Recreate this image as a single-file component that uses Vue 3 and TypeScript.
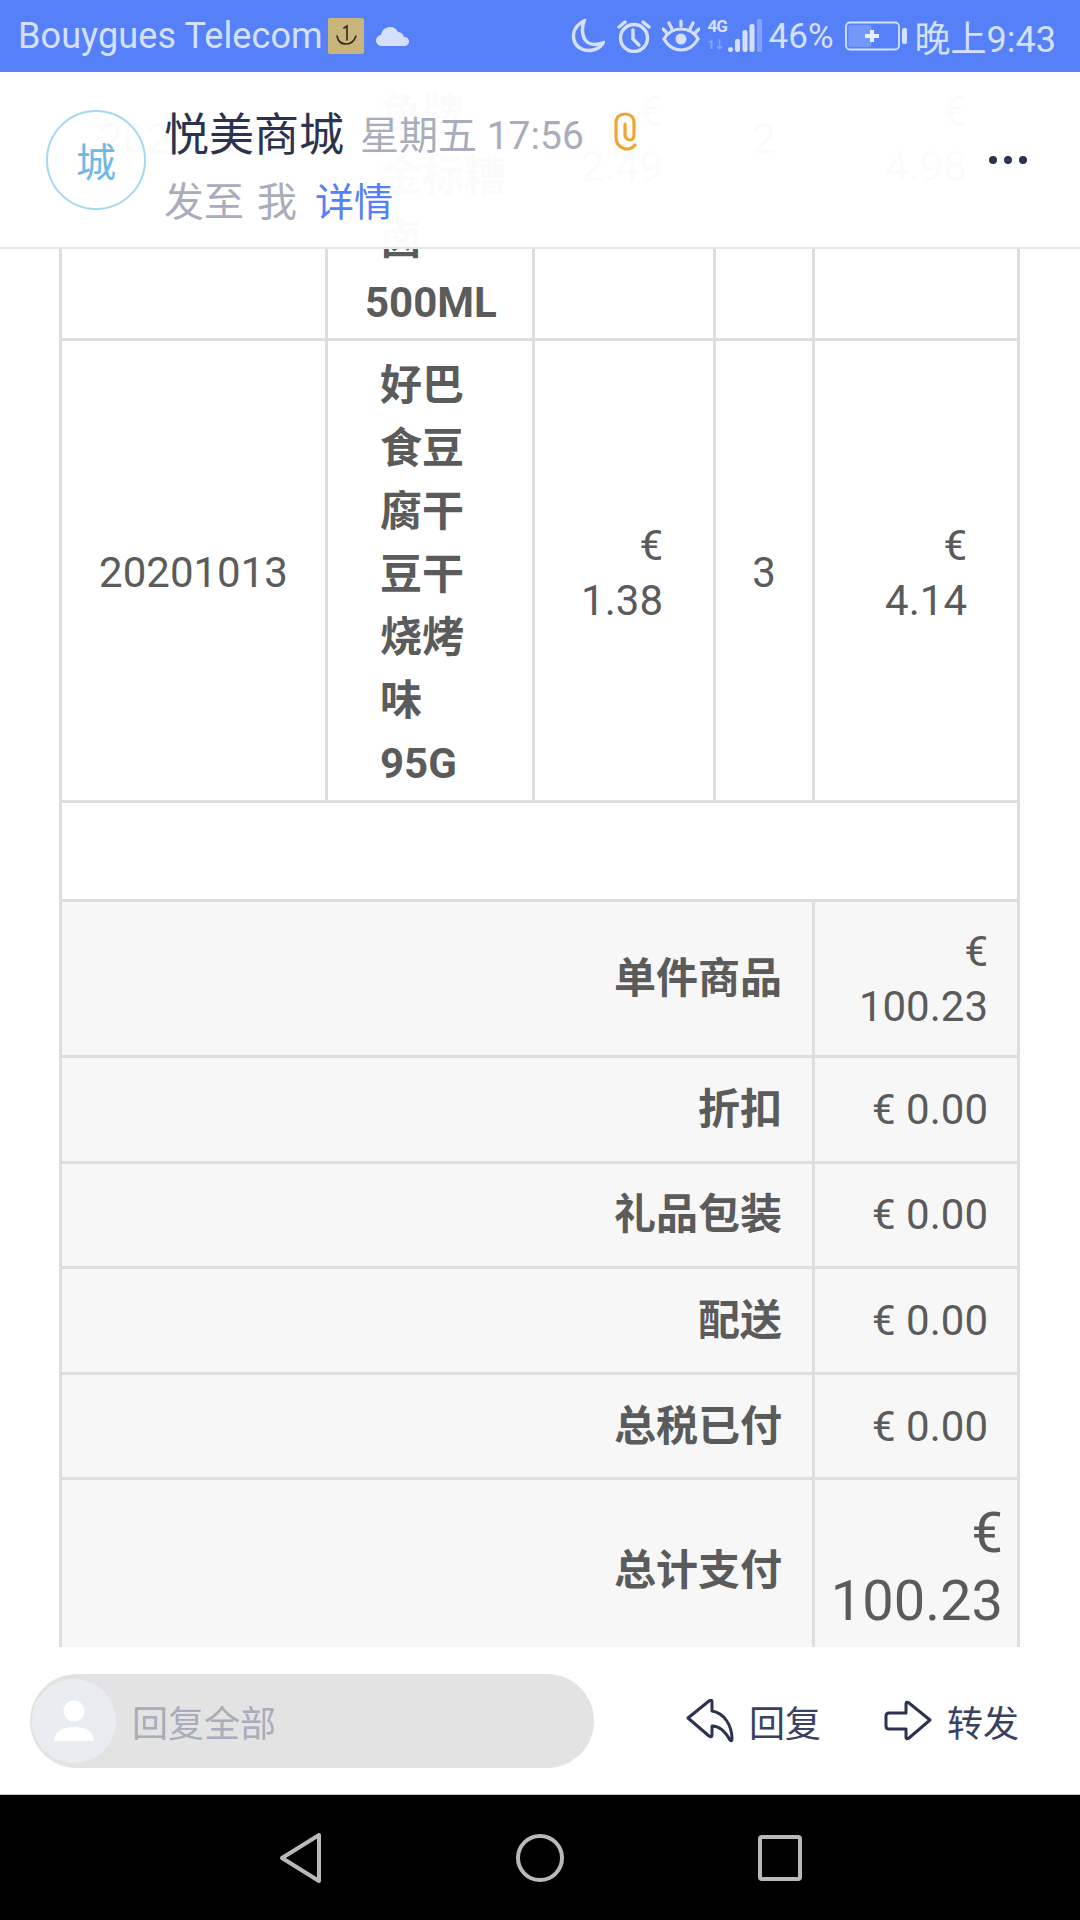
<template>
  <div class="screen">
    <!-- status bar -->
    <div class="status">
      <div class="status-left">
        <span class="carrier">Bouygues Telecom</span>
        <span class="tile">
          <svg width="36" height="36" viewBox="0 0 36 36" fill="none" stroke="#2c2a22" stroke-width="1.6" stroke-linecap="round">
            <path d="M9 18c1 6 5 8 9 8s8-2 10-8" />
            <path d="M16 10l3-2v14" />
          </svg>
        </span>
        <svg class="cloud" width="34" height="20" viewBox="0 0 34 20" fill="#d5e0ff">
          <path d="M7 20a5.500 5.500 0 0 1-1-11 9 9 0 0 1 17-3 7 7 0 0 1 6 5 4.500 4.500 0 0 1 1 9z" />
        </svg>
      </div>
      <div class="status-right">
        <svg width="34" height="34" viewBox="0 0 34 34" fill="none" stroke="#d5e0ff" stroke-width="3.500" stroke-linecap="round">
          <path d="M13 2C5 6 1 13 3 21c2 8 11 12 19 10 4-1 8-3 10-7-9 3-16 1-19-5-2-5-2-11 0-17z" />
        </svg>
        <svg class="ml-12" width="34" height="34" viewBox="0 0 34 34" fill="none" stroke="#d5e0ff" stroke-width="3.400" stroke-linecap="round">
          <circle cx="17" cy="19" r="13.500" />
          <path d="M16 11v9l6 6" />
          <path d="M2 8l6-5M32 8l-6-5" />
        </svg>
        <svg class="ml-11" width="38" height="34" viewBox="0 0 38 34" fill="none" stroke="#d5e0ff" stroke-width="3.200" stroke-linecap="round">
          <path d="M2 20c4-7 10-10 17-10s13 3 17 10c-4 7-10 11-17 11S6 27 2 20z" />
          <circle cx="19" cy="20" r="5.500" fill="#d5e0ff" stroke="none" />
          <path d="M19 2v5M7 4l3 6M31 4l-3 6M1 10l4 4M37 10l-4 4" />
        </svg>
        <div class="net">
          <span class="net-4g">4G</span>
          <span class="net-arrows">1↓</span>
        </div>
        <svg width="35" height="34" viewBox="0 0 35 34" fill="#d5e0ff">
          <rect x="1" y="28" width="5" height="5" rx="2.500" />
          <rect x="8" y="20" width="5" height="13" rx="2" />
          <rect x="15.500" y="11" width="5" height="22" rx="2" />
          <rect x="22.500" y="5" width="5" height="28" rx="2" />
          <rect x="30" y="0" width="5" height="33" rx="1" opacity="0.35" />
        </svg>
        <span class="pct">46%</span>
        <svg class="ml-11" width="62" height="30" viewBox="0 0 62 30" fill="none">
          <rect x="1" y="1.500" width="53" height="27" rx="4" stroke="#d5e0ff" stroke-width="1.800" />
          <rect x="3.500" y="4" width="23" height="22" rx="2" fill="#d5e0ff" opacity="0.25" />
          <path d="M20 15h14M27 9v12" stroke="#e8eeff" stroke-width="4" />
          <rect x="57" y="7" width="5" height="16" rx="2" fill="#d5e0ff" />
        </svg>
        <span class="clock">晚上9:43</span>
      </div>
    </div>

    <!-- scrolled mail body, the head floats over it -->
    <div class="body">
      <table class="order">
        <colgroup>
          <col class="c-date" />
          <col class="c-name" />
          <col class="c-price" />
          <col class="c-qty" />
          <col class="c-total" />
        </colgroup>
        <tbody>
          <tr v-for="row in items" :key="row.name" :class="row.cls">
            <td class="date">{{ row.date }}</td>
            <td class="name">
              <div v-for="line in row.lines" :key="line">{{ line }}</div>
            </td>
            <td class="price">€<br />{{ row.price }}</td>
            <td class="qty">{{ row.qty }}</td>
            <td class="price">€<br />{{ row.total }}</td>
          </tr>
          <tr><td class="spacer" colspan="5"></td></tr>
          <tr v-for="row in totals" :key="row.label" class="sum" :class="row.cls">
            <td class="sum-label" colspan="4">{{ row.label }}</td>
            <td class="sum-value" v-html="row.value"></td>
          </tr>
        </tbody>
      </table>

      <div class="head">
        <div class="logo">城</div>
        <div class="head-text">
          <div class="head-row">
            <span class="sender">悦美商城</span>
            <span class="when">星期五 17:56</span>
            <svg class="clip" width="24" height="40" viewBox="0 0 24 40" fill="none" stroke="#f5a32f" stroke-width="3.200" stroke-linecap="round">
              <path d="M21 33c-3 4-8 5-12 3-5-2-7-6-7-11V11C2 5 6 2 11 2s9 3 9 9v12c0 3-2 5-4 5s-5-2-5-5V12" />
            </svg>
          </div>
          <div class="head-row second">
            <span class="to">发至 我</span>
            <span class="detail">详情</span>
          </div>
        </div>
        <div class="dots"><i></i><i></i><i></i></div>
      </div>
    </div>

    <!-- reply bar -->
    <div class="reply">
      <div class="pill">
        <div class="avatar">
          <svg width="42" height="42" viewBox="0 0 42 42" fill="#fff">
            <circle cx="21" cy="11" r="10.500" />
            <path d="M1 41c0-9 8-14 20-14s20 5 20 14z" />
          </svg>
        </div>
        <span class="pill-text">回复全部</span>
      </div>
      <div class="actions">
        <div class="action">
          <svg width="48" height="44" viewBox="0 0 48 44" fill="none" stroke="#2b3350" stroke-width="3" stroke-linejoin="round">
            <path d="M2 19L23 2q3-2 3 1v9c12 2 20 14 20 28q0 3-2 1c-5-9-11-14-18-14v9q0 3-3 1z" />
          </svg>
          <span>回复</span>
        </div>
        <div class="action">
          <svg width="48" height="42" viewBox="0 0 48 42" fill="none" stroke="#2b3350" stroke-width="3" stroke-linejoin="round">
            <path d="M5 13h17V4q0-3 3-1l21 17-21 18q-3 2-3-1v-8H5q-3 0-3-3V16q0-3 3-3z" />
          </svg>
          <span>转发</span>
        </div>
      </div>
    </div>

    <!-- nav bar -->
    <div class="nav">
      <svg width="48" height="52" viewBox="0 0 48 52" fill="none" stroke="#b9b9b9" stroke-width="4" stroke-linejoin="round">
        <path d="M43 3v46L6 26z" />
      </svg>
      <svg width="48" height="52" viewBox="0 0 48 52" fill="none" stroke="#b9b9b9" stroke-width="4">
        <circle cx="24" cy="26" r="22" />
      </svg>
      <svg width="48" height="52" viewBox="0 0 48 52" fill="none" stroke="#b9b9b9" stroke-width="4" stroke-linejoin="round">
        <rect x="4" y="5" width="40" height="42" rx="2" />
      </svg>
    </div>
  </div>
</template>

<script setup lang="ts">
interface Item {
  date: string;
  name: string;
  lines: string[];
  price: string;
  qty: number;
  total: string;
  cls: string;
}

interface Total {
  label: string;
  value: string;
  cls?: string;
}

const items: Item[] = [
  {
    date: "20201013",
    name: "fish",
    lines: ["鱼牌", "金标糟", "卤", "500ML"],
    price: "2.49",
    qty: 2,
    total: "4.98",
    cls: "cut",
  },
  {
    date: "20201013",
    name: "tofu",
    lines: ["好巴", "食豆", "腐干", "豆干", "烧烤", "味", "95G"],
    price: "1.38",
    qty: 3,
    total: "4.14",
    cls: "low",
  },
];

const totals: Total[] = [
  { label: "单件商品", value: "€<br>100.23", cls: "two-line" },
  { label: "折扣", value: "€ 0.00" },
  { label: "礼品包装", value: "€ 0.00" },
  { label: "配送", value: "€ 0.00" },
  { label: "总税已付", value: "€ 0.00" },
  { label: "总计支付", value: "€<br>100.23", cls: "grand" },
];
</script>

<style>
html,
body {
  margin: 0;
  background: #fff;
}
</style>

<style scoped>
.screen {
  width: 1080px;
  height: 1920px;
  display: flex;
  flex-direction: column;
  overflow: hidden;
  font-family: Roboto, "Noto Sans CJK SC", sans-serif;
  background: #fff;
}

/* status bar */
.status {
  height: 72px;
  flex: none;
  display: flex;
  align-items: center;
  justify-content: space-between;
  padding: 0 24px 0 18px;
  background: #5580f8;
  color: #d5e0ff;
  font-size: 35px;
}
.status-left,
.status-right {
  display: flex;
  align-items: center;
}
.carrier {
  font-size: 36px;
  letter-spacing: 0.1px;
}
.tile {
  width: 36px;
  height: 36px;
  margin-left: 5px;
  background: #c9b47c;
  border-radius: 2px;
}
.tile svg {
  display: block;
}
.cloud {
  margin-left: 11px;
}
.ml-12 {
  margin-left: 12px;
}
.ml-11 {
  margin-left: 11px;
}
.net {
  width: 19px;
  margin-left: 8px;
  height: 34px;
  display: flex;
  flex-direction: column;
  justify-content: space-between;
  font-size: 17px;
  line-height: 15px;
  font-weight: 700;
  letter-spacing: -1px;
  white-space: nowrap;
}
.net-arrows {
  opacity: 0.4;
  font-size: 12px;
}
.pct {
  margin-left: 7px;
}
.clock {
  margin-left: 8px;
  font-size: 36px;
}

/* body and table */
.body {
  flex: 1;
  position: relative;
  overflow: hidden;
}
.order {
  width: 958px;
  margin: -132px 0 0 59px;
  table-layout: fixed;
  border-collapse: collapse;
  color: #5b5b5b;
  font-size: 42px;
  line-height: 55px;
}
.order td {
  border: 3px solid #dedede;
  padding: 0;
}
.c-date {
  width: 266px;
}
.c-name {
  width: 207px;
}
.c-price {
  width: 181px;
}
.c-qty {
  width: 99px;
}
.c-total {
  width: 205px;
}
.date,
.qty {
  text-align: center;
}
.order .name {
  padding: 13px 0 5px 52px;
  font-weight: 700;
  line-height: 63px;
  white-space: nowrap;
}
.order .cut .name {
  padding: 139px 0 4px 37px;
}
.cut .name div:nth-child(-n + 3) {
  padding-left: 15px;
}
.order .price {
  padding-right: 50px;
  text-align: right;
}
.order .cut .date,
.order .cut .price,
.order .cut .qty {
  padding-bottom: 4px;
}
.order .low .date,
.order .low .price,
.order .low .qty {
  padding-top: 4px;
}
.order .spacer {
  height: 96px;
}
.sum td {
  background: #f7f7f7;
  height: 102.6px;
  text-align: right;
}
.order .sum-label {
  padding-right: 30px;
  font-weight: 700;
}
.order .sum-value {
  padding-right: 29px;
}
.sum.two-line td {
  height: 153px;
}
.sum.grand td {
  height: 168px;
}
.order .sum.grand .sum-label {
  padding-top: 6px;
}
.order .sum.grand .sum-value {
  padding-right: 14px;
  font-size: 56px;
  line-height: 68px;
}

/* mail head floats over the table */
.head {
  position: absolute;
  top: 0;
  left: 0;
  right: 0;
  height: 177px;
  box-sizing: border-box;
  display: flex;
  align-items: center;
  padding-left: 46px;
  background: rgba(255, 255, 255, 0.975);
  border-bottom: 2px solid #e6e6e6;
}
.logo {
  width: 100px;
  height: 100px;
  flex: none;
  box-sizing: border-box;
  display: flex;
  align-items: center;
  justify-content: center;
  border: 2px solid #a6d8ef;
  border-radius: 50%;
  color: #6fb9e6;
  font-size: 40px;
}
.head-text {
  margin: 6px 0 0 18px;
}
.head-row {
  height: 72px;
  display: flex;
  align-items: center;
  white-space: nowrap;
}
.second {
  height: 62px;
}
.sender {
  color: #2b3350;
  font-size: 45px;
}
.when {
  margin-left: 16px;
  color: #a9adbb;
  font-size: 39px;
}
.clip {
  margin-left: 30px;
}
.to {
  color: #a9adbb;
  font-size: 40px;
  word-spacing: 3px;
}
.detail {
  margin-left: 18px;
  color: #5580f8;
  font-size: 39px;
}
.dots {
  margin-left: auto;
  padding-right: 53px;
  display: flex;
  gap: 7px;
}
.dots i {
  width: 8px;
  height: 8px;
  border-radius: 50%;
  background: #2b3350;
}

/* reply bar */
.reply {
  height: 147px;
  flex: none;
  box-sizing: border-box;
  display: flex;
  align-items: center;
  padding: 0 61px 0 30px;
  background: #fff;
  position: relative;
}
.pill {
  width: 564px;
  height: 94px;
  display: flex;
  align-items: center;
  padding-left: 2px;
  box-sizing: border-box;
  border-radius: 47px;
  background: #e3e3e3;
}
.avatar {
  width: 84px;
  height: 84px;
  display: flex;
  align-items: center;
  justify-content: center;
  border-radius: 50%;
  background: #e9edf2;
}
.pill-text {
  margin-left: 16px;
  color: #a9adbb;
  font-size: 36px;
}
.actions {
  margin-left: auto;
  display: flex;
  gap: 63px;
}
.action {
  display: flex;
  align-items: center;
  gap: 15px;
  color: #3a4160;
  font-size: 36px;
}

/* nav bar */
.nav {
  height: 126px;
  flex: none;
  box-sizing: border-box;
  display: flex;
  align-items: center;
  justify-content: center;
  gap: 192px;
  background: #000;
  border-top: 1px solid #c8c8c8;
}
</style>
